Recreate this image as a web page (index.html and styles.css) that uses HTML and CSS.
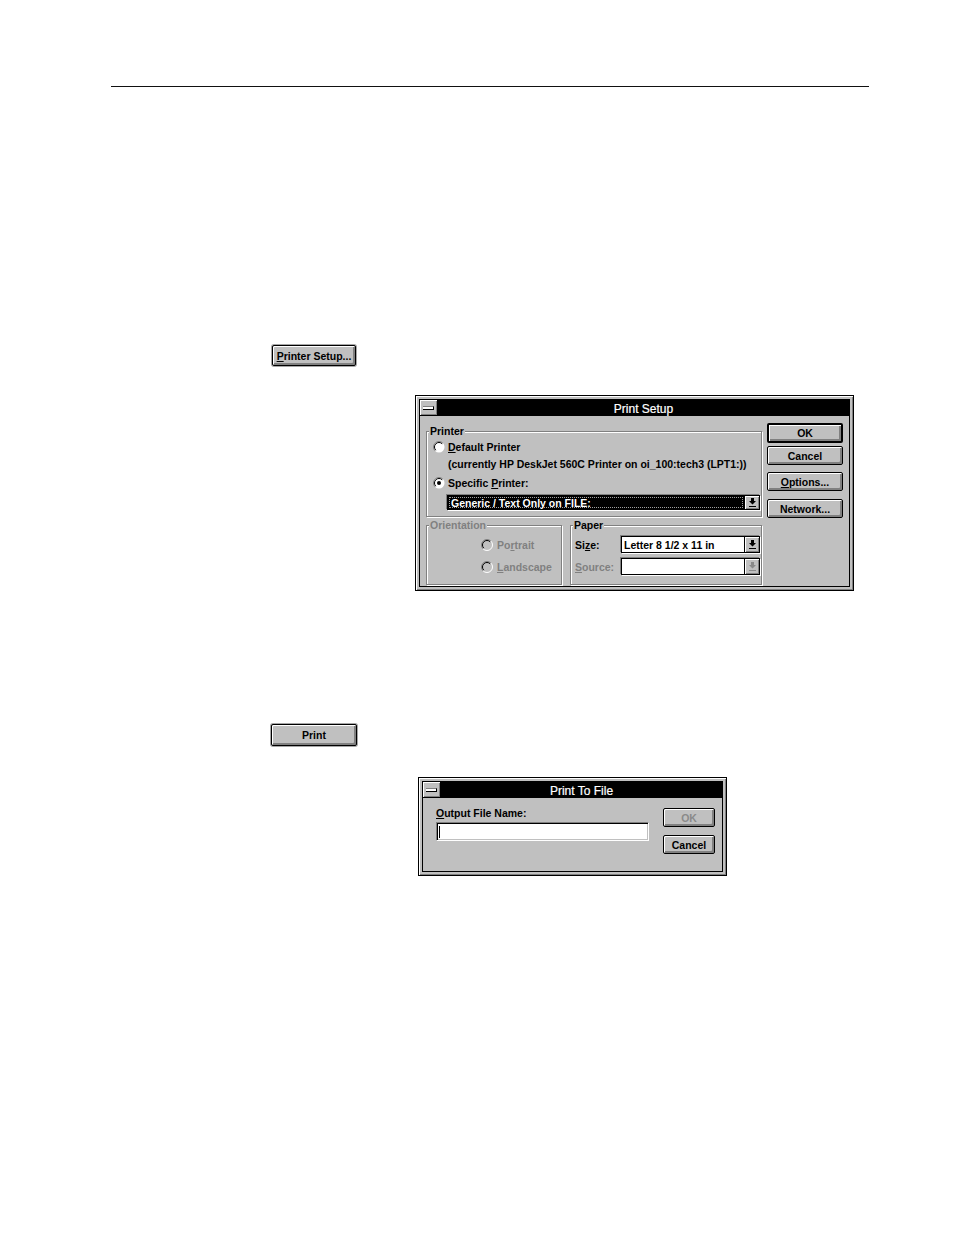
FILE: index.html
```html
<!DOCTYPE html>
<html>
<head>
<meta charset="utf-8">
<link rel="stylesheet" href="styles.css">
</head>
<body>
<div class="page">
  <div class="rule"></div>

  <div class="btn doc-btn setup-btn"><span><u>P</u>rinter Setup...</span></div>

  <div class="dlg dlg-setup">
    <div class="dlg-inner">
      <div class="titlebar">
        <div class="sysbox"><div class="dash"></div></div>
        <div class="title">Print Setup</div>
      </div>
      <div class="client setup-client">
        <div class="left-col">
          <div class="group printer-group">
            <span class="group-label">Printer</span>
            <div class="row r1">
              <svg class="radio" width="12" height="12" viewBox="0 0 12 12"><circle cx="6" cy="6" r="5.5" fill="#fff"/><path d="M2.1 9.9A5.5 5.5 0 0 1 9.9 2.1" fill="none" stroke="#808080"/><path d="M2.8 9.2A4.5 4.5 0 0 1 9.2 2.8" fill="none" stroke="#000"/></svg>
              <span><u>D</u>efault Printer</span>
            </div>
            <div class="row r2">(currently HP DeskJet 560C Printer on oi_100:tech3 (LPT1:))</div>
            <div class="row r3">
              <svg class="radio" width="12" height="12" viewBox="0 0 12 12"><circle cx="6" cy="6" r="5.5" fill="#fff"/><path d="M2.1 9.9A5.5 5.5 0 0 1 9.9 2.1" fill="none" stroke="#808080"/><path d="M2.8 9.2A4.5 4.5 0 0 1 9.2 2.8" fill="none" stroke="#000"/><circle cx="6" cy="6" r="2" fill="#000"/></svg>
              <span>Specific <u>P</u>rinter:</span>
            </div>
            <div class="combo printer-combo">
              <div class="field sel"><span class="focus">Generic / Text Only on FILE:</span></div>
              <div class="arrow"><svg width="7" height="9" viewBox="0 0 7 9"><path d="M2 0h3v3h2L3.5 6.5 0 3h2z" fill="#000"/><rect x="0" y="8" width="7" height="1" fill="#000"/></svg></div>
            </div>
          </div>
          <div class="lower">
            <div class="group orient-group">
              <span class="group-label dis">Orientation</span>
              <div class="row o1">
                <svg class="radio" width="12" height="12" viewBox="0 0 12 12"><circle cx="6" cy="6" r="5.5" fill="#c0c0c0"/><path d="M2.1 9.9A5.5 5.5 0 0 1 9.9 2.1" fill="none" stroke="#808080"/><path d="M2.8 9.2A4.5 4.5 0 0 1 9.2 2.8" fill="none" stroke="#000"/><path d="M9.9 2.1A5.5 5.5 0 0 1 2.1 9.9" fill="none" stroke="#fff"/></svg>
                <span class="dis">Po<u>r</u>trait</span>
              </div>
              <div class="row o2">
                <svg class="radio" width="12" height="12" viewBox="0 0 12 12"><circle cx="6" cy="6" r="5.5" fill="#c0c0c0"/><path d="M2.1 9.9A5.5 5.5 0 0 1 9.9 2.1" fill="none" stroke="#808080"/><path d="M2.8 9.2A4.5 4.5 0 0 1 9.2 2.8" fill="none" stroke="#000"/><path d="M9.9 2.1A5.5 5.5 0 0 1 2.1 9.9" fill="none" stroke="#fff"/></svg>
                <span class="dis"><u>L</u>andscape</span>
              </div>
            </div>
            <div class="group paper-group">
              <span class="group-label">Paper</span>
              <div class="prow p1">
                <span class="plabel">Si<u>z</u>e:</span>
                <div class="combo paper-combo">
                  <div class="field"><span class="ftext">Letter 8 1/2 x 11 in</span></div>
                  <div class="arrow"><svg width="7" height="9" viewBox="0 0 7 9"><path d="M2 0h3v3h2L3.5 6.5 0 3h2z" fill="#000"/><rect x="0" y="8" width="7" height="1" fill="#000"/></svg></div>
                </div>
              </div>
              <div class="prow p2">
                <span class="plabel dis"><u>S</u>ource:</span>
                <div class="combo paper-combo">
                  <div class="field"></div>
                  <div class="arrow"><svg width="7" height="9" viewBox="0 0 7 9"><path d="M2 0h3v3h2L3.5 6.5 0 3h2z" fill="#8a8a8a"/><rect x="0" y="8" width="7" height="1" fill="#8a8a8a"/></svg></div>
                </div>
              </div>
            </div>
          </div>
        </div>
        <div class="btn-col">
          <div class="btn dbtn def">OK</div>
          <div class="btn dbtn b-cancel">Cancel</div>
          <div class="btn dbtn b-options"><span><u>O</u>ptions...</span></div>
          <div class="btn dbtn b-network">Network...</div>
        </div>
      </div>
    </div>
  </div>

  <div class="btn doc-btn print-btn">Print</div>

  <div class="dlg dlg-file">
    <div class="dlg-inner">
      <div class="titlebar">
        <div class="sysbox"><div class="dash"></div></div>
        <div class="title">Print To File</div>
      </div>
      <div class="client file-client">
        <div class="file-left">
          <div class="row f-label"><span><u>O</u>utput File Name:</span></div>
          <div class="edit"><div class="caret"></div></div>
        </div>
        <div class="file-btns">
          <div class="btn fbtn dis-btn">OK</div>
          <div class="btn fbtn f-cancel">Cancel</div>
        </div>
      </div>
    </div>
  </div>
</div>
</body>
</html>
```

FILE: styles.css
```css
* { box-sizing: border-box; }
body { margin: 0; background: #fff; font-family: "Liberation Sans", Arial, sans-serif; color: #000; }
.page { width: 954px; height: 1235px; padding-top: 86px; overflow: hidden; }
.rule { margin-left: 111px; width: 758px; height: 1px; background: #111; }

u { text-decoration: underline; text-decoration-thickness: 1px; text-underline-offset: 1px; }

.btn {
  display: flex; align-items: center; justify-content: center;
  background: #c0c0c0; border: 1px solid #000; border-radius: 2px;
  box-shadow: inset 1px 1px #fff, inset -2px -2px #808080;
  font-size: 10.5px; font-weight: bold; white-space: nowrap;
}
.doc-btn { box-shadow: inset 1px 1px #fff, inset -2px -2px #808080, 0 0 0 1px rgba(0,0,0,0.35); }
.setup-btn { margin: 258px 0 0 272px; width: 84px; height: 21px; }
.print-btn { margin: 133px 0 0 271px; width: 86px; height: 22px; }

.dlg {
  border: 1px solid #000; background: #c0c0c0; padding: 3px;
  box-shadow: inset 1px 1px #fff, inset -1px -1px #808080;
}
.dlg-setup { margin: 29px 0 0 415px; width: 439px; height: 196px; }
.dlg-file { margin: 31px 0 0 418px; width: 309px; height: 99px; }
.dlg-inner { border: 1px solid #000; height: 100%; display: flex; flex-direction: column; background: #c0c0c0; }

.titlebar { height: 16px; display: flex; background: #000; flex: none; }
.sysbox {
  width: 18px; height: 15px; background: #c0c0c0; border-right: 1px solid #000;
  box-shadow: inset 1px 1px #fff, inset -1px -1px #808080;
  display: flex; align-items: center; justify-content: center;
}
.dash { width: 11px; height: 4px; background: #fff; border-top: 1px solid #808080; border-bottom: 1px solid #000; border-right: 1px solid #000; margin-top: 1px; }
.title { flex: 1; color: #fff; font-size: 12px; line-height: 15px; padding-top: 2px; text-align: center; -webkit-text-stroke: 0.2px #fff; }

.client { flex: 1; font-size: 10.5px; font-weight: bold; }
.setup-client { display: grid; grid-template-columns: 336px 76px; column-gap: 5px; padding: 7px 0 0 6px; }
.left-col { padding-top: 8px; }

.group {
  position: relative; border: 1px solid #808080;
  box-shadow: inset 1px 1px #fff, 1px 1px #fff;
}
.group-label { position: absolute; top: -7px; left: 2px; background: #c0c0c0; padding: 0 1px; line-height: 12px; white-space: nowrap; }
.dis { color: #808080; }

.row { display: flex; align-items: center; height: 17px; white-space: nowrap; }
.radio { flex: none; margin-right: 3px; }

.printer-group { height: 86px; padding: 7px 0 0 6px; }
.r1 { margin-top: -1px; }
.r2 { margin-left: 15px; }
.r3 { margin-top: 2px; }

.combo { display: flex; border: 1px solid #000; box-shadow: -1px -1px #808080, 1px 1px #fff; background: #fff; }
.printer-combo { margin: 4px 0 0 14px; width: 313px; height: 15px; }
.field { flex: 1; display: flex; align-items: center; padding-left: 2px; overflow: hidden; white-space: nowrap; }
.field.sel { background: #000; padding: 1px; }
.focus { flex: 1; color: #fff; height: 100%; border: 1px dotted #a0a0a0; display: flex; align-items: center; padding-left: 1px; }
.ftext { font-weight: bold; }
.arrow {
  width: 15px; flex: none; border-left: 1px solid #000; background: #c0c0c0;
  box-shadow: inset 1px 1px #fff, inset -1px -1px #808080;
  display: flex; align-items: center; justify-content: center;
}

.lower { display: flex; column-gap: 8px; margin-top: 8px; }
.orient-group { width: 136px; height: 60px; padding: 10px 0 0 54px; }
.orient-group .radio { margin-right: 4px; }
.o2 { margin-top: 5px; }
.paper-group { width: 192px; height: 60px; padding: 10px 1px 0 4px; }
.prow { display: flex; align-items: center; height: 17px; }
.p2 { margin-top: 5px; }
.plabel { width: 46px; flex: none; }
.paper-combo { width: 139px; height: 17px; }

.btn-col { display: flex; flex-direction: column; }
.dbtn { width: 76px; height: 19px; }
.def { border: 2px solid #000; height: 20px; }
.b-cancel { margin-top: 3px; }
.b-options { margin-top: 7px; }
.b-network { margin-top: 8px; }

.file-client { display: flex; padding: 0 7px 0 13px; column-gap: 14px; }
.file-left { width: 213px; padding-top: 8px; }
.f-label { height: 13px; }
.edit {
  margin-top: 3px; height: 19px; background: #fff;
  border: 1px solid; border-color: #808080 #fff #fff #808080;
  box-shadow: inset 1px 1px #000, inset -1px -1px #c0c0c0;
  padding: 3px 0 0 2px;
}
.caret { width: 1px; height: 12px; background: #000; }
.file-btns { width: 52px; padding-top: 10px; display: flex; flex-direction: column; }
.fbtn { height: 19px; }
.dis-btn { color: #8a8a8a; }
.f-cancel { margin-top: 8px; }
```
